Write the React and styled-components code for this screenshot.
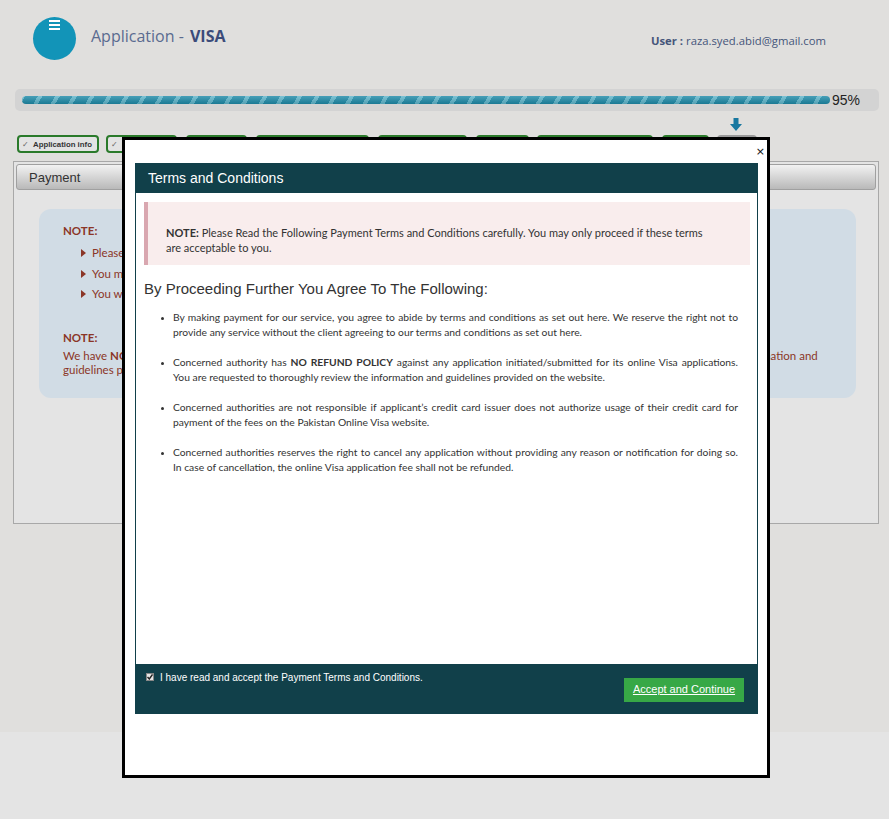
import styled, { createGlobalStyle } from 'styled-components';

const GlobalStyle = createGlobalStyle`
  html, body {
    margin: 0;
    padding: 0;
    background: #e4e4e4;
  }
  body {
    font-family: "Open Sans", "Liberation Sans", sans-serif;
  }
`;

const Page = styled.div`
  background: #e0dfdd;
  height: 732px;
  box-shadow: 0 4px 10px rgba(0, 0, 0, 0.22);
  overflow: hidden;
`;

const Header = styled.header`
  display: flex;
  align-items: center;
  padding: 17px 0 0 33px;
  height: 43px;
`;

const MenuBadge = styled.div`
  width: 43px;
  height: 43px;
  border-radius: 50%;
  background: #1294b8;
  display: flex;
  justify-content: center;
  padding-top: 3px;
  box-sizing: border-box;
`;

const AppTitle = styled.h1`
  margin: 0 0 5px 15px;
  font-size: 16px;
  font-weight: 400;
  color: #5a6b90;
  b {
    color: #3b4b7a;
    font-weight: 700;
    margin-left: 2px;
  }
`;

const UserInfo = styled.div`
  margin: 4px 63px 0 auto;
  font-size: 11.3px;
  color: #45557a;
  b {
    font-weight: 700;
  }
`;

const ProgressWrap = styled.div`
  margin: 29px 10px 0 15px;
  height: 22px;
  background: #d3d3d3;
  border-radius: 5px;
  display: flex;
  align-items: center;
  padding-left: 7px;
`;

const ProgressTrack = styled.div`
  width: 808px;
  height: 8px;
  border-radius: 4px;
  overflow: hidden;
  background:
    linear-gradient(to bottom, rgba(255, 255, 255, 0.18), rgba(0, 0, 0, 0.12)),
    repeating-linear-gradient(
      -60deg,
      #1e8aa8 0 11px,
      #5fb6cc 11px 15px
    );
`;

const ProgressLabel = styled.span`
  margin-left: 2px;
  font-family: "Liberation Sans", Arial, sans-serif;
  font-size: 14px;
  color: #222;
`;

const Tabs = styled.nav`
  position: relative;
  display: flex;
  margin: 24px 0 0 17px;
  height: 18px;
`;

const Tab = styled.div`
  position: relative;
  width: ${(p) => p.$w}px;
  margin-right: ${(p) => p.$gap}px;
  box-sizing: border-box;
  border: 2px solid ${(p) => (p.$done ? '#2a7a2a' : '#9a9a9a')};
  border-radius: 4px;
  background: #e3e3e3;
  font-family: "Liberation Sans", Arial, sans-serif;
  font-size: 7.8px;
  font-weight: 700;
  color: #333;
  display: flex;
  align-items: center;
  padding-left: 3px;
  white-space: nowrap;
  overflow: hidden;
  span {
    color: #666;
    font-weight: 400;
    margin-right: 4px;
  }
`;

const CurrentMarker = styled.svg`
  position: absolute;
  left: 713px;
  top: -17px;
`;

const Panel = styled.section`
  margin: 8px 10px 0 13px;
  height: 363px;
  box-sizing: border-box;
  border: 1px solid #a8a8a8;
  background: #e4e4e4;
  padding: 2px;
`;

const PanelHead = styled.div`
  height: 26px;
  box-sizing: border-box;
  border: 1px solid #a0a0a0;
  border-radius: 3px;
  background: linear-gradient(to bottom, #f2f2f2, #b9b9b9);
  font-family: "Liberation Sans", Arial, sans-serif;
  font-size: 13px;
  color: #333;
  display: flex;
  align-items: center;
  padding-left: 12px;
`;

const NoteBox = styled.div`
  margin: 19px 20px 0 23px;
  height: 189px;
  box-sizing: border-box;
  border-radius: 12px;
  background: #d1dce5;
  padding: 14px 35px 14px 24px;
  font-family: Lato, "Open Sans", sans-serif;
  font-size: 11.5px;
  color: #8b3627;
`;

const NoteTitle = styled.div`
  font-weight: 700;
  line-height: 16px;
  margin-top: ${(p) => p.$top || 0}px;
`;

const NoteList = styled.ul`
  list-style: none;
  margin: 4px 0 0;
  padding: 0 0 0 18px;
  li {
    line-height: 20.5px;
    position: relative;
    padding-left: 11px;
  }
  li::before {
    content: '';
    position: absolute;
    left: 0;
    top: 6px;
    border-left: 5px solid #8b3627;
    border-top: 4px solid transparent;
    border-bottom: 4px solid transparent;
  }
`;

const NoteText = styled.p`
  margin: 3px 0 0;
  line-height: 14px;
  b {
    font-weight: 700;
  }
`;

/* modal */

const Modal = styled.div`
  position: absolute;
  left: 122px;
  top: 137px;
  width: 648px;
  height: 641px;
  box-sizing: border-box;
  border: 3px solid #000;
  background: #fff;
  padding: 0 9px 0 10px;
`;

const CloseRow = styled.div`
  height: 23px;
  display: flex;
  justify-content: flex-end;
  align-items: center;
  margin-right: -7px;
  font-family: "DejaVu Sans", sans-serif;
  font-size: 11px;
  color: #111;
  box-sizing: border-box;
`;

const Frame = styled.div`
  display: flex;
  flex-direction: column;
`;

const FrameHead = styled.div`
  height: 30px;
  background: #11404a;
  color: #fff;
  font-family: "Liberation Sans", Arial, sans-serif;
  font-size: 14px;
  display: flex;
  align-items: center;
  padding-left: 13px;
`;

const FrameBody = styled.div`
  height: 471px;
  box-sizing: border-box;
  border-left: 1px solid #11404a;
  border-right: 1px solid #11404a;
  padding: 9px 7px 0 8px;
`;

const Alert = styled.div`
  height: 63px;
  box-sizing: border-box;
  background: #f9eded;
  border-left: 4px solid #d9a7b0;
  padding: 23px 40px 0 18px;
  font-family: Lato, "Open Sans", sans-serif;
  font-size: 11px;
  line-height: 15px;
  color: #333;
  b {
    font-weight: 700;
  }
`;

const Agreement = styled.h3`
  margin: 14px 0 0;
  font-family: "Liberation Sans", Arial, sans-serif;
  font-size: 15px;
  font-weight: 400;
  line-height: 20px;
  color: #333;
`;

const Terms = styled.ul`
  margin: 11px 0 0;
  padding: 0 12px 0 29px;
  list-style: disc;
  font-family: Lato, "Open Sans", sans-serif;
  font-size: 10.3px;
  line-height: 15px;
  color: #333;
  li {
    text-align: justify;
    margin-bottom: 15px;
  }
  li::marker {
    font-size: 8px;
  }
  b {
    font-weight: 700;
  }
`;

const FrameFoot = styled.div`
  height: 50px;
  background: #11404a;
  display: flex;
  justify-content: space-between;
  align-items: flex-start;
  padding: 8px 14px 0 11px;
  box-sizing: border-box;
`;

const Consent = styled.label`
  display: flex;
  align-items: center;
  font-family: "Liberation Sans", Arial, sans-serif;
  font-size: 10px;
  line-height: 12px;
  color: #fff;
`;

const CheckMark = styled.span`
  width: 8px;
  height: 8px;
  background: #e6e6e6;
  border: 1px solid #888;
  box-sizing: border-box;
  margin-right: 6px;
  margin-top: -3px;
  display: flex;
  align-items: center;
  justify-content: center;
`;

const AcceptButton = styled.button`
  margin-top: 6px;
  width: 120px;
  height: 24px;
  border: 0;
  background: #37a846;
  color: #fff;
  font-family: "Liberation Sans", Arial, sans-serif;
  font-size: 11px;
  text-decoration: underline;
  cursor: pointer;
  padding: 0 0 2px;
`;

const tabs = [
  { label: 'Application info', w: 82, gap: 7, done: true },
  { label: 'Personal Info', w: 71, gap: 9, done: true },
  { label: 'Passport', w: 61, gap: 9, done: true },
  { label: 'Contact & Address Info', w: 113, gap: 9, done: true },
  { label: 'Visa Info', w: 89, gap: 9, done: true },
  { label: 'Family', w: 53, gap: 8, done: true },
  { label: 'Travel & Accommodation', w: 116, gap: 9, done: true },
  { label: 'Security', w: 47, gap: 8, done: true },
  { label: 'Payment', w: 40, gap: 0, done: false },
];

const terms = [
  <>
    By making payment for our service, you agree to abide by terms and conditions as set out
    here. We reserve the right not to provide any service without the client agreeing to our
    terms and conditions as set out here.
  </>,
  <>
    Concerned authority has <b>NO REFUND POLICY</b> against any application initiated/submitted
    for its online Visa applications. You are requested to thoroughly review the information and
    guidelines provided on the website.
  </>,
  <>
    Concerned authorities are not responsible if applicant’s credit card issuer does not
    authorize usage of their credit card for payment of the fees on the Pakistan Online Visa
    website.
  </>,
  <>
    Concerned authorities reserves the right to cancel any application without providing any
    reason or notification for doing so. In case of cancellation, the online Visa application fee
    shall not be refunded.
  </>,
];

export default function App() {
  return (
    <>
      <GlobalStyle />
      <Page>
        <Header>
          <MenuBadge>
            <svg width="11" height="10" viewBox="0 0 11 10">
              <rect x="0" y="0" width="11" height="2" fill="#fff" />
              <rect x="0" y="4" width="11" height="2" fill="#fff" />
              <rect x="0" y="8" width="11" height="2" fill="#fff" />
            </svg>
          </MenuBadge>
          <AppTitle>
            Application - <b>VISA</b>
          </AppTitle>
          <UserInfo>
            <b>User :</b> raza.syed.abid@gmail.com
          </UserInfo>
        </Header>

        <ProgressWrap>
          <ProgressTrack />
          <ProgressLabel>95%</ProgressLabel>
        </ProgressWrap>

        <Tabs>
          <CurrentMarker width="12" height="13" viewBox="0 0 12 13">
            <path d="M3.5 0h5v6h3.5L6 13 0 6h3.5z" fill="#1878a0" />
          </CurrentMarker>
          {tabs.map((t) => (
            <Tab key={t.label} $w={t.w} $gap={t.gap} $done={t.done}>
              {t.done && <span>✓</span>}
              {t.label}
            </Tab>
          ))}
        </Tabs>

        <Panel>
          <PanelHead>Payment</PanelHead>
          <NoteBox>
            <NoteTitle>NOTE:</NoteTitle>
            <NoteList>
              <li>Please make sure that all the information provided is correct before payment.</li>
              <li>You may pay the visa fee online using a Visa or MasterCard credit card.</li>
              <li>You will receive a confirmation email once the payment is successful.</li>
            </NoteList>
            <NoteTitle $top={25}>NOTE:</NoteTitle>
            <NoteText>
              We have <b>NO REFUND POLICY</b> against any application initiated/submitted for online
              visa. You are requested to thoroughly review the information and guidelines provided
              on the website before making the payment.
            </NoteText>
          </NoteBox>
        </Panel>
      </Page>

      <Modal role="dialog" aria-label="Terms and Conditions">
        <CloseRow>×</CloseRow>
        <Frame>
          <FrameHead>Terms and Conditions</FrameHead>
          <FrameBody>
            <Alert>
              {' '}<b>NOTE:</b> Please Read the Following Payment Terms and Conditions carefully.
              You may only proceed if these terms are acceptable to you.
            </Alert>
            <Agreement>By Proceeding Further You Agree To The Following:</Agreement>
            <Terms>
              {terms.map((t, i) => (
                <li key={i}>{t}</li>
              ))}
            </Terms>
          </FrameBody>
          <FrameFoot>
            <Consent>
              <CheckMark>
                <svg width="6" height="6" viewBox="0 0 6 6">
                  <path d="M0.5 3l1.8 2L5.5 0.5" stroke="#222" strokeWidth="1.4" fill="none" />
                </svg>
              </CheckMark>
              I have read and accept the Payment Terms and Conditions.
            </Consent>
            <AcceptButton>Accept and Continue</AcceptButton>
          </FrameFoot>
        </Frame>
      </Modal>
    </>
  );
}
